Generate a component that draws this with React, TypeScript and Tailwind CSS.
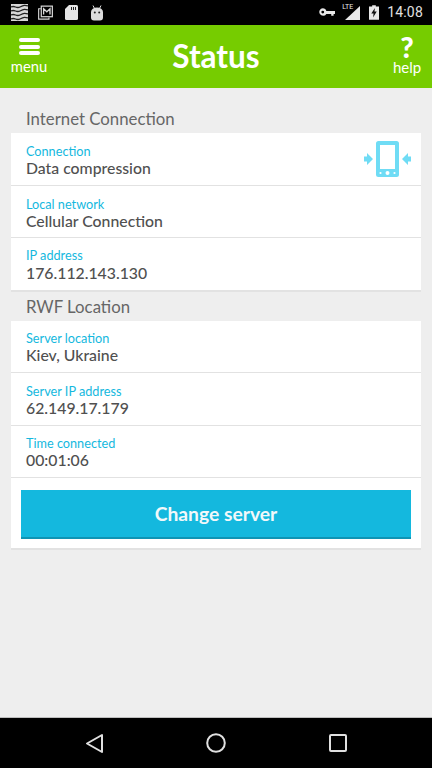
import React from "react";

const font = { fontFamily: "Lato, sans-serif" };

function Row({ label, value, className, valueClass, children }: { label: string; value: string; className: string; valueClass?: string; children?: React.ReactNode }) {
  return (
    <div className={`relative pl-[15px] ${className}`}>
      <div className="text-[12.700px] leading-[16px] text-[#14b8de]">{label}</div>
      <div className={`text-[15.800px] font-medium text-[#505050] ${valueClass ?? "leading-[18px]"}`}>{value}</div>
      {children}
    </div>
  );
}

function PhoneIcon() {
  return (
    <svg className="absolute right-[10px] top-[8px]" width="47" height="36" viewBox="0 0 47 36" fill="#6fdcf5">
      <path d="M0 15.500h3V12l6 6-6 6v-3.500H0z" />
      <path d="M47 15.500h-3V12l-6 6 6 6v-3.500h3z" />
      <path fillRule="evenodd" d="M14.500 0h18a2.500 2.500 0 0 1 2.500 2.500v31a2.500 2.500 0 0 1-2.500 2.500h-18a2.500 2.500 0 0 1-2.500-2.500v-31A2.500 2.500 0 0 1 14.500 0zm1.500 4v24h15V4z" />
      <circle cx="16.500" cy="32" r="1.100" fill="#fff" />
      <circle cx="23.500" cy="32" r="2" fill="#fff" />
      <circle cx="30.500" cy="32" r="1.100" fill="#fff" />
    </svg>
  );
}

function StatusBar() {
  return (
    <div className="flex h-[25px] items-center justify-between bg-black pl-[11px] pr-[9px]">
      <div className="flex items-center gap-[10px]">
        <svg width="17" height="17" viewBox="0 0 17 17">
          <rect width="17" height="17" fill="#d8d8d8" />
          <path d="M0 3c4-2 5 2 9 0s5-2 8-1M0 7c4-2 5 2 9 0s5-2 8-1M0 11c4-2 5 2 9 0s5-2 8-1M0 15c4-2 5 2 9 0s5-2 8-1" stroke="#222" strokeWidth="1.300" fill="none" />
        </svg>
        <svg width="15" height="15" viewBox="0 0 16 15" fill="none" stroke="#d8d8d8">
          <path d="M3 3.500H.7v11h11v-1.700" strokeWidth="1.200" />
          <rect x="3.500" y="0.700" width="11.800" height="11.300" strokeWidth="1.300" />
          <path d="M6 9.500V3.500l3.400 3.200 3.400-3.200v6" strokeWidth="1.400" />
        </svg>
        <svg className="ml-[2px]" width="13" height="15" viewBox="0 0 13 15" fill="#e4e4e4">
          <path d="M4 0h7.500A1.500 1.500 0 0 1 13 1.500v12a1.500 1.500 0 0 1-1.500 1.500h-10A1.500 1.500 0 0 1 0 13.500V4z" />
          <path d="M6 2h1v3H6zm2 0h1v3H8zm2 0h1v3h-1z" fill="#222" />
        </svg>
        <svg className="ml-[2px]" width="14" height="16" viewBox="0 0 14 16" fill="#dcdcdc">
          <path d="M1 7a6 4.500 0 0 1 12 0v5.500a3 3 0 0 1-3 3H4a3 3 0 0 1-3-3z" />
          <path d="M3 .5l1.500 3M11 .5 9.500 3.500" stroke="#dcdcdc" fill="none" />
          <circle cx="4.800" cy="7.500" r="1" fill="#222" />
          <circle cx="9.200" cy="7.500" r="1" fill="#222" />
        </svg>
      </div>
      <div className="flex items-center">
        <svg width="16" height="9" viewBox="0 0 17 9" fill="#e8e8e8">
          <path fillRule="evenodd" d="M4 0a4 4 0 0 1 3.800 3H17v3h-1.500v2h-2.500V6H7.800A4 4 0 1 1 4 0zm0 2.600a1.500 1.500 0 1 0 0 3 1.500 1.500 0 0 0 0-3z" />
        </svg>
        <div className="relative ml-[7px] h-[15px] w-[18px]">
          <svg className="absolute bottom-0 right-0" width="15" height="14" viewBox="0 0 15 14" fill="#e8e8e8">
            <path d="M15 0v14H0z" />
          </svg>
          <span className="absolute left-0 top-[-2px] text-[7px] leading-[9px] text-[#e8e8e8]" style={{ fontFamily: "Roboto, sans-serif" }}>LTE</span>
        </div>
        <svg className="ml-[9px]" width="10" height="15" viewBox="0 0 11 16">
          <path d="M3.500 0h4v1.500H11V16H0V1.500h3.500z" fill="#e8e8e8" />
          <path d="M6.500 3 2.500 9h2.500l-.5 4.500 4-6.500H6z" fill="#111" />
        </svg>
        <span className="ml-[8px] text-[14px] leading-[25px] tracking-[0.2px] text-[#e0e0e0]" style={{ fontFamily: "Roboto, sans-serif" }}>14:08</span>
      </div>
    </div>
  );
}

function Header() {
  return (
    <div className="flex h-[63px] items-start justify-between bg-[#76cc00] text-white">
      <div className="flex w-[58px] flex-col items-center pt-[13px]">
        <div className="flex w-[21px] flex-col gap-[2.500px]">
          <div className="h-[4px] rounded-full bg-white" />
          <div className="h-[4px] rounded-full bg-white" />
          <div className="h-[4px] rounded-full bg-white" />
        </div>
        <div className="mt-[2px] text-[14.800px] leading-[18px]">menu</div>
      </div>
      <div className="-ml-[8px] pt-[13px] text-[31.500px] leading-[36px] font-bold">Status</div>
      <div className="flex w-[50px] flex-col items-center pt-[8px]">
        <div className="text-[29px] leading-[27px] font-black">?</div>
        <div className="-mt-[2px] text-[15px] leading-[18px]">help</div>
      </div>
    </div>
  );
}

export default function App() {
  return (
    <div className="flex h-[768px] w-[432px] flex-col overflow-hidden bg-[#eeeeee]" style={font}>
      <StatusBar />
      <Header />
      <main className="flex-1 px-[11px]">
        <div className="flex h-[45px] items-end pb-[4px] pl-[15px] text-[16.800px] leading-[20px] text-[#666666]">Internet Connection</div>
        <div className="border-b-2 border-[#e2e2e2] bg-white">
          <Row label="Connection" value="Data compression" className="h-[53px] border-b border-[#e2e2e2] pt-[10px]"><PhoneIcon /></Row>
          <Row label="Local network" value="Cellular Connection" className="h-[52px] border-b border-[#e2e2e2] pt-[10px]" />
          <Row label="IP address" value="176.112.143.130" className="h-[52px] pt-[9px]" valueClass="leading-[19px]" />
        </div>
        <div className="flex h-[29px] items-center pl-[15px] text-[16.800px] leading-[20px] text-[#666666]">RWF Location</div>
        <div className="border-b-2 border-[#e2e2e2] bg-white">
          <Row label="Server location" value="Kiev, Ukraine" className="h-[52px] border-b border-[#e2e2e2] pt-[9px]" valueClass="leading-[18px]" />
          <Row label="Server IP address" value="62.149.17.179" className="h-[53px] border-b border-[#e2e2e2] pt-[10px]" />
          <Row label="Time connected" value="00:01:06" className="h-[52px] border-b border-[#e2e2e2] pt-[9px]" />
          <div className="px-[10px] pb-[9px] pt-[12px]">
            <button className="block h-[49px] w-full border-b-2 border-[#0f94b4] bg-[#14b8de] pt-[2px] text-[19.300px] font-bold text-[#f2f8fa]">Change server</button>
          </div>
        </div>
      </main>
      <div className="flex h-[51px] items-center justify-between border-t border-[#bdbdbd] bg-black pl-[85px] pr-[85px]">
        <svg width="19" height="21" viewBox="0 0 19 21" fill="none" stroke="#e0e0e0" strokeWidth="2" strokeLinejoin="round">
          <path d="M17 2v17L2 10.500z" />
        </svg>
        <svg className="mr-[1px]" width="20" height="20" viewBox="0 0 20 20" fill="none" stroke="#e0e0e0" strokeWidth="2">
          <circle cx="10" cy="10" r="8.800" />
        </svg>
        <svg width="18" height="18" viewBox="0 0 18 18" fill="none" stroke="#e0e0e0" strokeWidth="2" strokeLinejoin="round">
          <rect x="1" y="1" width="16" height="16" rx="1" />
        </svg>
      </div>
    </div>
  );
}
